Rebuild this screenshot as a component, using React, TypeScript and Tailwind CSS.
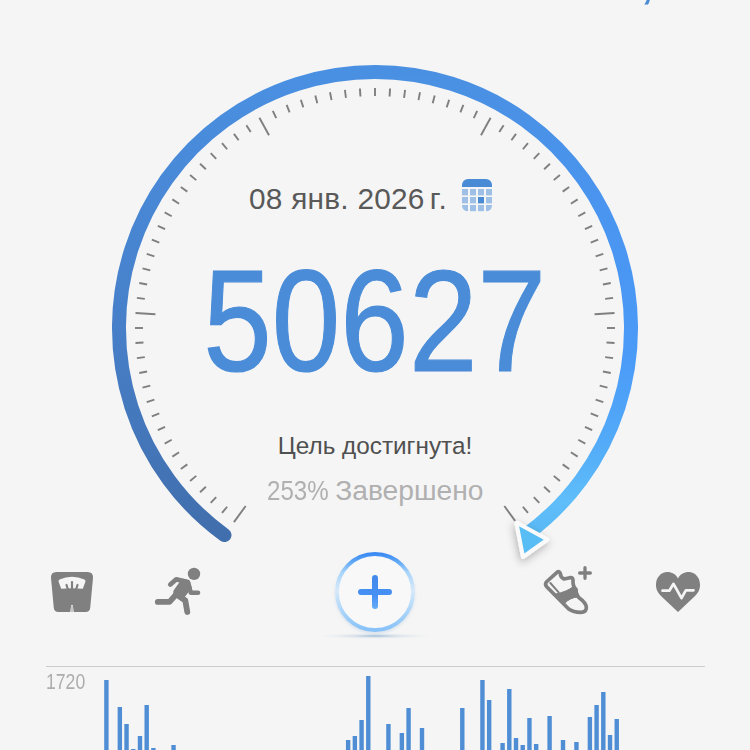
import React from 'react';

const CENTER_X = 375;
const CENTER_Y = 328;

// bar slots are 6.715px apart, values are heights above the fold
const bars: [number, number][] = [
  [0, 70], [2, 43], [3, 26], [4, 1], [5, 14], [6, 45], [7, 2], [10, 5],
  [36, 10], [37, 14], [38, 30], [39, 74], [42, 26], [44, 17], [45, 42], [47, 22],
  [53, 42], [56, 70], [57, 50], [59, 7], [60, 61], [61, 12], [62, 5], [63, 32],
  [64, 6], [66, 34], [68, 10], [70, 8], [72, 33], [73, 45], [74, 58], [75, 15], [76, 31],
];

function Dial() {
  const ticks = Array.from({ length: 81 }, (_, i) => i);

  return (
    <svg width="750" height="546" viewBox="0 0 750 546" className="block overflow-visible">
      <defs>
        <linearGradient id="ringLeft" gradientUnits="userSpaceOnUse" x1="0" y1="72" x2="0" y2="540">
          <stop offset="0" stopColor="#4a90e2" />
          <stop offset="0.55" stopColor="#477fc8" />
          <stop offset="1" stopColor="#416eac" />
        </linearGradient>
        <linearGradient id="ringRight" gradientUnits="userSpaceOnUse" x1="0" y1="72" x2="0" y2="540">
          <stop offset="0" stopColor="#4a90e2" />
          <stop offset="0.3" stopColor="#4a95f0" />
          <stop offset="0.6" stopColor="#4a9af7" />
          <stop offset="0.78" stopColor="#52a9f8" />
          <stop offset="0.92" stopColor="#5fbefa" />
          <stop offset="1" stopColor="#58b8f3" />
        </linearGradient>
        <filter id="pointerShadow" x="-50%" y="-50%" width="200%" height="200%">
          <feDropShadow dx="-1" dy="3" stdDeviation="4" floodColor="#000" floodOpacity="0.28" />
        </filter>
      </defs>

      <path d="M224.5 535.1A256 256 0 0 1 375 72" fill="none" stroke="url(#ringLeft)" strokeWidth="14" strokeLinecap="round" />
      <path d="M374.5 72A256 256 0 0 1 525.5 535.1" fill="none" stroke="url(#ringRight)" strokeWidth="14" />

      {ticks.map((i) => (
        <line
          key={i}
          x1={CENTER_X}
          x2={CENTER_X}
          y1={CENTER_Y - 240}
          y2={CENTER_Y - (i % 16 === 0 ? 220 : 232)}
          stroke="#7f7f7f"
          strokeWidth="1.9"
          transform={`rotate(${-144 + i * 3.6} ${CENTER_X} ${CENTER_Y})`}
        />
      ))}

      <path
        d="M516.3 522.5L547.5 539.5L523 557Z"
        fill="#58bdf4"
        stroke="#fafafa"
        strokeWidth="4"
        strokeLinejoin="round"
        filter="url(#pointerShadow)"
      />
    </svg>
  );
}

function CalendarIcon() {
  return (
    <svg width="30" height="33" viewBox="0 0 30 33">
      <clipPath id="calClip">
        <rect width="30" height="32.500" rx="6" />
      </clipPath>
      <g clipPath="url(#calClip)">
        <rect width="30" height="8" fill="#4a8bd6" />
        {[0, 1, 2].map((row) =>
          [0, 1, 2, 3].map((col) => (
            <rect
              key={`${row}-${col}`}
              x={col * 8}
              y={10 + row * 8}
              width="6"
              height="6.4"
              fill={row === 1 && col === 2 ? '#4a8bd6' : '#9fc0e6'}
            />
          ))
        )}
      </g>
    </svg>
  );
}

function ScaleIcon() {
  return (
    <svg width="44" height="100" viewBox="50 546 44 100">
      <path d="M56.5 572H87.500Q93.500 572 93 578L90.200 608Q89.700 612 85.500 612H73.700L72.800 605H71.200L70.300 612H58.500Q54.300 612 53.800 608L51 578Q50.500 572 56.500 572Z" fill="#808080" />
      <path d="M70.600 612L71.300 605.500H72.700L73.400 612Z" fill="#c5c5c5" />
      <path d="M59.500 579.500Q72 574 84.500 579.500Q86 580.500 85.300 582L82.800 588.800Q72 587.500 61.200 588.800L58.700 582Q58 580.500 59.500 579.500Z" fill="#f5f5f5" />
      <path d="M72 582V589M66.500 585L67.800 589M77.500 585L76.200 589" stroke="#808080" strokeWidth="2.200" strokeLinecap="round" />
    </svg>
  );
}

function RunnerIcon() {
  return (
    <svg width="50" height="100" viewBox="153 546 50 100" fill="none" stroke="#808080" strokeLinecap="round" strokeLinejoin="round">
      <circle cx="194" cy="573.900" r="6.200" fill="#808080" stroke="none" />
      <path d="M170.300 584.500L176.300 579.300L185.500 581.500" strokeWidth="4.800" />
      <path d="M183 581L175.500 591.500L182 597L189.500 587.500L188 582Z" fill="#808080" strokeWidth="4.400" />
      <path d="M188 583L190.800 592.700H198" strokeWidth="4.600" />
      <path d="M177.500 593L169.500 601.900H157.800" strokeWidth="5.800" />
      <path d="M176 594L185.300 600.500L187.300 612" strokeWidth="5.800" />
    </svg>
  );
}

function ShoeIcon() {
  return (
    <svg width="52" height="100" viewBox="542 546 52 100">
      <g transform="translate(520 550) scale(0.33333)" fill="none" stroke="#808080" strokeWidth="11" strokeLinejoin="round" strokeLinecap="round">
        <path d="M79 96L111 67Q118 62 121 70Q121 82 132 87L150 83Q158 82 159 90Q158 110 168 118Q168 136 179 145Q198 158 199 173Q199 186 182 187Q160 187 146 177L80 110Q74 103 79 96Z" />
        <path d="M91 99L116 127" strokeWidth="6" />
        <path d="M107 132Q140 126 161 109L171 116Q171 130 178 140Q150 142 134 160Z" fill="#808080" strokeWidth="3" />
        <path d="M179 69H211M195 53V85" strokeWidth="10" />
      </g>
    </svg>
  );
}

function HeartIcon() {
  return (
    <svg width="44" height="100" viewBox="656 546 44 100">
      <path d="M678 612L661.500 596.500C656.500 591.500 656 588 656 584.500C656 577.500 661 572 667.300 572C672 572 676 574.300 678 578.500C680 574.300 684 572 688.700 572C695 572 700 577.500 700 584.500C700 588 699.500 591.500 694.500 596.500Z" fill="#808080" />
      <path d="M662.500 590.700H669.300L673.500 583.800L681.500 598.200L685.800 590.300H693.500" fill="none" stroke="#f5f5f5" strokeWidth="2.700" strokeLinejoin="round" strokeLinecap="round" />
    </svg>
  );
}

function AddButton() {
  return (
    <button type="button" aria-label="+">
      <svg width="120" height="100" viewBox="315 546 120 100">
        <defs>
          <linearGradient id="addRing" x1="0" y1="0" x2="0" y2="1">
            <stop offset="0" stopColor="#3c8bf2" />
            <stop offset="0.1" stopColor="#5ea6f5" />
            <stop offset="0.24" stopColor="#a9d4fa" />
            <stop offset="0.48" stopColor="#d7e9f9" />
            <stop offset="0.75" stopColor="#abd5fa" />
            <stop offset="1" stopColor="#87c2f8" />
          </linearGradient>
          <linearGradient id="addPlus" gradientUnits="userSpaceOnUse" x1="0" y1="575" x2="0" y2="609">
            <stop offset="0" stopColor="#4389ea" />
            <stop offset="0.6" stopColor="#4690f5" />
            <stop offset="1" stopColor="#64adf8" />
          </linearGradient>
          <radialGradient id="addShadow">
            <stop offset="0" stopColor="#6e9cc9" stopOpacity="0.7" />
            <stop offset="0.4" stopColor="#9fb9d3" stopOpacity="0.3" />
            <stop offset="1" stopColor="#c8d4e0" stopOpacity="0" />
          </radialGradient>
          <filter id="addGlow" x="-20%" y="-20%" width="140%" height="140%">
            <feDropShadow dx="0" dy="2" stdDeviation="1.5" floodColor="#7aa5d0" floodOpacity="0.25" />
          </filter>
        </defs>
        <ellipse cx="375" cy="636" rx="56" ry="3" fill="url(#addShadow)" />
        <circle cx="375" cy="592" r="38" fill="#f8f8f8" stroke="url(#addRing)" strokeWidth="3.800" filter="url(#addGlow)" />
        <path d="M372 578a3 3 0 0 1 6 0v11h11a3 3 0 0 1 0 6h-11v11a3 3 0 0 1-6 0v-11h-11a3 3 0 0 1 0-6h11z" fill="url(#addPlus)" />
      </svg>
    </button>
  );
}

function StepChart() {
  return (
    <div className="mx-[46px] mr-[45px] flex h-[84px] border-t border-[#cccccc]">
      <span className="mt-[3px] h-6 w-[58px] origin-left scale-x-[0.82] whitespace-nowrap text-[21.500px] leading-6 text-[#adadad]">
        1720
      </span>
      <svg width="520" height="83" viewBox="0 0 520 83" className="block shrink-0">
        {bars.map(([slot, height]) => (
          <rect key={slot} x={slot * 6.715 + 0.2} y={83 - height} width="4.400" height={height} fill="#4f8ed5" />
        ))}
      </svg>
    </div>
  );
}

export default function App() {
  return (
    <main className="flex h-[750px] w-[750px] flex-col overflow-hidden bg-[#f5f5f5] font-['Liberation_Sans',Arial,sans-serif]">
      <section className="relative h-[546px] shrink-0">
        <Dial />
        <span className="absolute left-[639px] top-[-53px] text-[60px] leading-[60px] text-[#4a8bd6]">,</span>

        <div className="absolute inset-0 flex flex-col items-center pt-[179px]">
          <div className="mr-[9px] flex h-10 w-[243px] justify-between">
            <span className="whitespace-nowrap text-[29.800px] leading-10 tracking-[0.25px] text-[#595959]">
              08 янв. 2026<span className="ml-[5px] tracking-[1.500px]">г.</span>
            </span>
            <CalendarIcon />
          </div>
          <div className="mt-[30px] h-[145px] scale-x-[0.85] text-[145px] leading-[145px] text-[#4a8cd8] [-webkit-text-stroke:1.2px_#4a8cd8]">50627</div>
          <div className="mt-[36px] whitespace-nowrap text-[24.300px] leading-8 text-[#505050]">Цель достигнута!</div>
          <div className="mt-[12px] flex h-8 w-[217px] justify-between whitespace-nowrap text-[28.200px] leading-8 text-[#b0b0b0]">
            <span className="w-[62px] origin-left scale-x-[0.855]">253%</span>
            <span>Завершено</span>
          </div>
        </div>
      </section>

      <nav className="flex h-[100px] shrink-0 pl-[50px]">
        <ScaleIcon />
        <div className="ml-[59px]"><RunnerIcon /></div>
        <div className="ml-[112px]"><AddButton /></div>
        <div className="ml-[107px]"><ShoeIcon /></div>
        <div className="ml-[62px]"><HeartIcon /></div>
      </nav>

      <div className="mt-[20px]">
        <StepChart />
      </div>
    </main>
  );
}
